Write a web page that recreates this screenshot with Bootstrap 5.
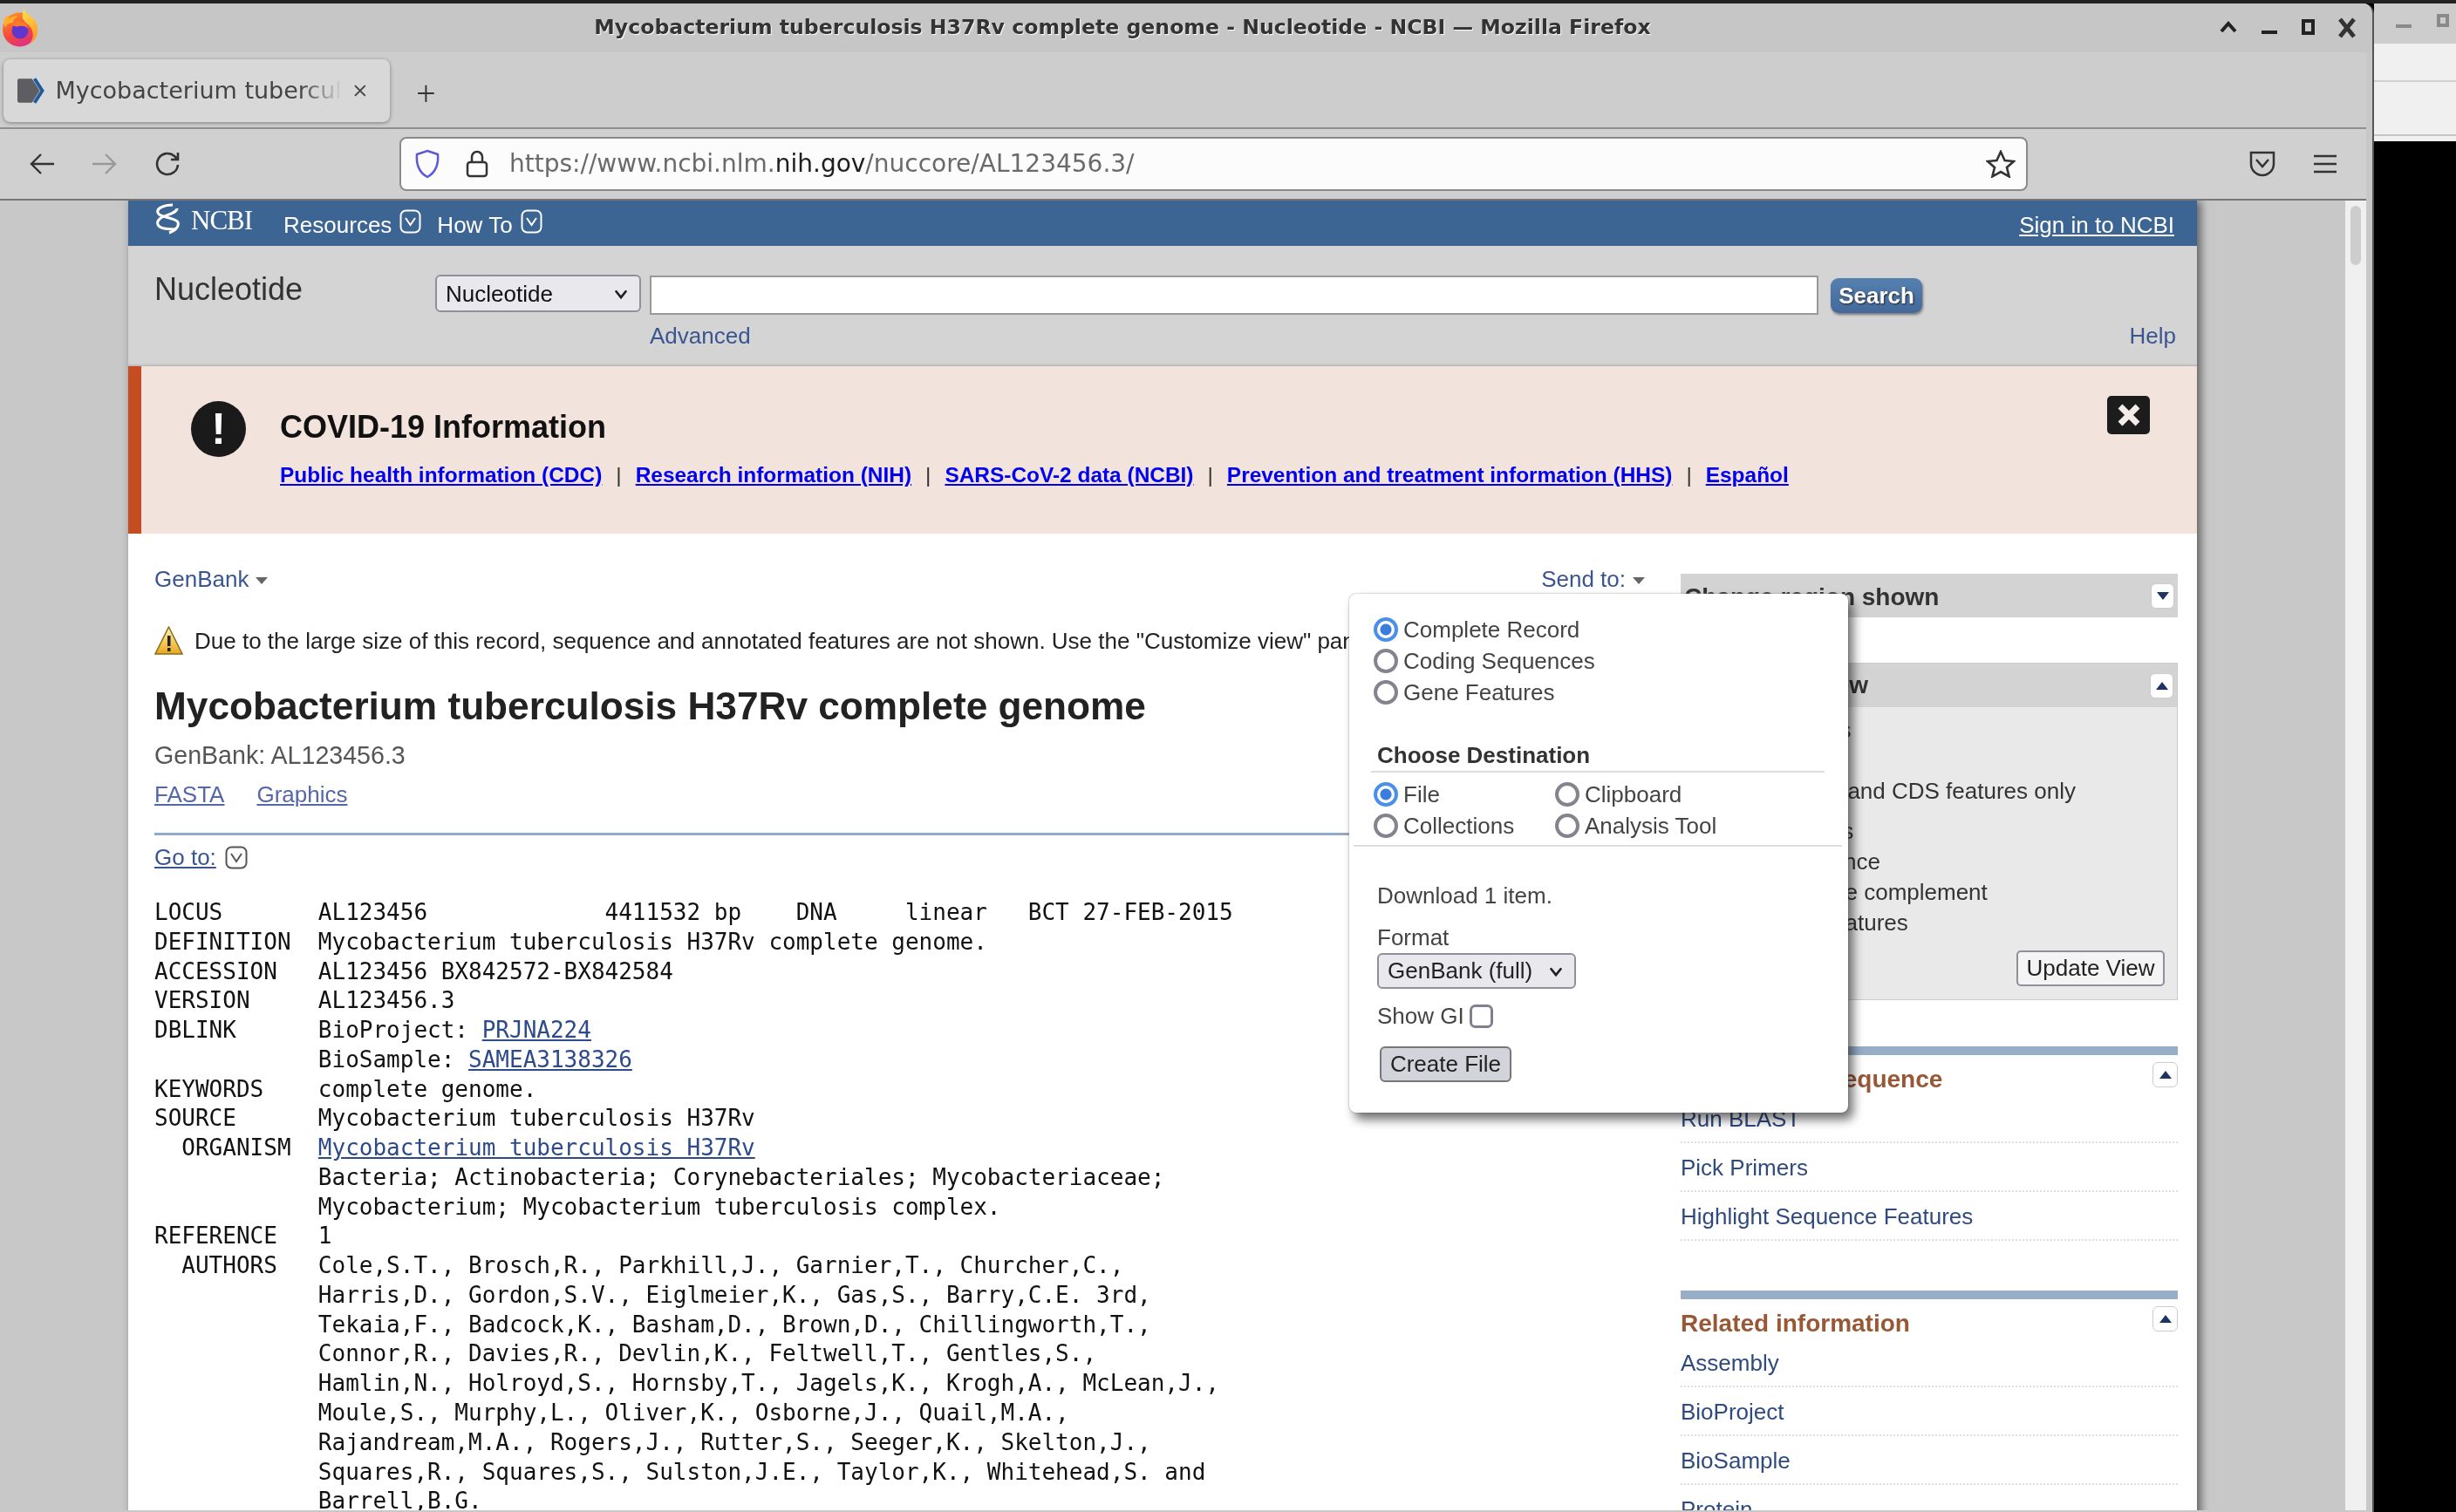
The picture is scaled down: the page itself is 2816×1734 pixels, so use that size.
<!DOCTYPE html>
<html lang="en">
<head>
  <meta charset="UTF-8">
  <title>Mycobacterium tuberculosis H37Rv complete genome - Nucleotide - NCBI</title>
  <link rel="stylesheet" href="https://cdn.jsdelivr.net/npm/bootstrap@5.3.0/dist/css/bootstrap.min.css">
  <style>
    html, body { height: 100%; }
    body { background: #000; overflow: hidden; font-family: "Liberation Sans", sans-serif; font-size: 26px; color: #222; }
    a { color: #3b5590; text-decoration: none; }

    /* desktop windows, the screenshot is a soft upscale so everything gets a slight blur */
    .back-win { position: absolute; left: 2722px; top: 4px; width: 94px; height: 158px; background: #f0f0f0; filter: blur(.6px); }
    .back-title { height: 46px; background: #cdcdcd; padding: 0 8px 0 25px; }
    .back-line { height: 44px; border-bottom: 2px solid #cfcfcf; }
    .back-line2 { height: 62px; border-bottom: 2px solid #c4c4c4; }
    .back-min { width: 18px; height: 4px; background: #8a8a8a; margin-top: 6px; }
    .back-max { width: 14px; height: 15px; border: 4px solid #8a8a8a; margin-top: -8px; }
    .top-strip { position: absolute; left: 0; top: 0; width: 100%; height: 4px; background: #222; }
    .win { position: absolute; left: 0; top: 4px; width: 2722px; height: 1730px; background: #c8c8c8; border-right: 2px solid #555; border-top-right-radius: 12px; overflow: hidden; filter: blur(.6px); }
    .win-body { margin-right: 7px; }

    /* firefox chrome */
    .title-row { height: 56px; background: #c6c6c6; padding-right: 146px; }
    .ff-logo { position: absolute; left: 1px; top: 5px; }
    .win-title { font-family: "DejaVu Sans", sans-serif; font-weight: 700; font-size: 23.6px; color: #333; text-shadow: 1px 1px 1px #fff; }
    .win-ctrls { position: absolute; right: 15px; top: 14px; gap: 18px; }
    .tab-row { height: 88px; background: #cdcdcd; border-bottom: 2px solid #8e8e8e; padding: 8px 0 0 4px; }
    .ff-tab { width: 443px; height: 72px; background: #d8d8d8; border-radius: 8px; box-shadow: 0 1px 4px rgba(0,0,0,.4); padding: 0 26px 0 16px; gap: 12px; }
    .tab-text { width: 336px; overflow: hidden; white-space: nowrap; font-family: "DejaVu Sans", sans-serif; font-size: 27px; color: #444; -webkit-mask-image: linear-gradient(to right, #000 85%, transparent); mask-image: linear-gradient(to right, #000 85%, transparent); }
    .tab-plus { margin-left: 30px; font-size: 40px; font-weight: 300; color: #333; line-height: 1; font-family: "Noto Sans", sans-serif; }
    .tool-row { height: 82px; background: #d0d0d0; border-bottom: 2px solid #777; padding: 0 34px 0 33px; }
    .tool-gap { margin-left: 42px; }
    .url-box { width: 1867px; height: 62px; margin-left: 249px; background: #fcfcfc; border: 2px solid #8a8a8a; border-radius: 8px; padding: 0 12px 0 15px; }
    .url-text { font-family: "DejaVu Sans", sans-serif; font-size: 28px; color: #6a6a6a; white-space: nowrap; margin-left: 24px; }
    .url-text b { font-weight: 400; color: #1e1e1e; }
    .pocket-ico { margin-right: 44px; }
    .lock-ico { margin-left: 29px; }

    /* page viewport */
    .viewport { height: 1502px; background: #c8c8c8; padding-left: 147px; overflow: hidden; }
    .ncbi-page { width: 2372px; height: 1600px; background: #fff; box-shadow: 4px 0 10px rgba(0,0,0,.55); flex: none; }
    .scroll-track { width: 24px; height: 1502px; margin-left: 170px; background: #f0f0f0; padding: 6px 6px; flex: none; }
    .scroll-thumb { height: 68px; background: #cdcdcd; border-radius: 6px; }

    .ncbi-bar { height: 52px; background: #3d6593; padding: 4px 26px 0 30px; color: #fff; }
    .ncbi-bar a { color: #fff; }
    .helix-ico { margin-top: -14px; }
    .ncbi-word { font-family: "Liberation Serif", serif; font-size: 31px; letter-spacing: -1px; margin-left: 10px; margin-right: 36px; margin-top: -10px; }
    .ncbi-res { margin-right: 9px; }
    .ncbi-chev { margin-right: 18px; margin-top: -8px; }
    .ncbi-sign { margin-left: auto; text-decoration: underline; }

    .search-area { height: 138px; background: #d4d4d4; padding-left: 30px; box-shadow: inset 0 -3px 3px -2px #aaa; }
    .db-name { width: 322px; font-size: 36px; color: #333; margin-top: 28px; line-height: 44px; }
    .db-select { width: 236px; height: 43px; padding: 0 30px 0 10px; font-size: 26px; line-height: 38px; background-color: #e9e9ed; border: 2px solid #8f8f9d; border-radius: 6px; color: #111; margin-top: 33px; background-position: right 10px center; background-size: 22px; --bs-form-select-bg-img: url("data:image/svg+xml,%3csvg xmlns='http://www.w3.org/2000/svg' viewBox='0 0 16 16'%3e%3cpath fill='none' stroke='%23222' stroke-linecap='round' stroke-width='2' d='M4 6l4 5 4-5'/%3e%3c/svg%3e"); }
    .term-input { width: 1340px; height: 45px; margin: 34px 0 0 10px; border: 2px solid #999; border-radius: 0; padding: 0 6px; font-size: 26px; }
    .search-btn { height: 40px; width: 105px; margin: 37px 0 0 14px; padding: 0; background: linear-gradient(#5480b0, #43699a); border: 0; border-radius: 9px; color: #fff; font-weight: 700; font-size: 26px; text-shadow: 1px 1px 2px #222; box-shadow: 1px 2px 3px #777; }
    .adv-row { padding: 0 24px 0 568px; margin-top: 6px; line-height: 36px; }

    .covid-box { height: 192px; background: #f2e3dc; border-left: 15px solid #c64c22; padding: 40px 30px 0 57px; }
    .covid-icon { width: 63px; height: 64px; border-radius: 50%; background: #1a1a1a; color: #fff; font-weight: 700; font-size: 50px; line-height: 64px; text-align: center; flex: none; margin-right: 39px; }
    .covid-head { font-size: 36px; font-weight: 700; line-height: 60px; color: #111; margin-bottom: 0; }
    .covid-links { font-size: 24.45px; font-weight: 700; line-height: 36px; margin-top: 7px; white-space: nowrap; }
    .covid-links a { color: #0000ee; text-decoration: underline; }
    .covid-links span { font-weight: 400; margin: 0 16px; color: #333; }
    .covid-x { position: absolute; left: 2095px; top: -6px; width: 49px; height: 44px; background: #1c1c1c; border-radius: 5px; color: #fff; }
    .covid-wrap { position: relative; flex: 1; }

    .rec-col { width: 1709px; flex: none; margin-right: 41px; }
    .rec-main { padding-left: 30px; }
    .rec-bar { height: 36px; line-height: 36px; margin-top: 34px; width: 1709px; }
    .caret-mini { display: inline-block; border: 7px solid transparent; border-top: 8px solid #666; border-bottom: 0; margin-left: 8px; vertical-align: 3px; }
    .warn-row { height: 36px; line-height: 36px; margin-top: 35px; white-space: nowrap; overflow: hidden; color: #222; gap: 13px; }
    .rec-title { font-size: 44.2px; font-weight: 700; line-height: 60px; height: 60px; margin: 27px 0 8px; color: #222; white-space: nowrap; }
    .rec-acc { font-size: 28.6px; color: #555; height: 36px; line-height: 36px; }
    .rec-links { height: 36px; line-height: 36px; margin-top: 9px; gap: 37px; }
    .rec-links a { color: #5567ab; text-decoration: underline; }
    .rec-rule { height: 3px; background: #93aac4; margin-top: 26px; }
    .goto-row { height: 36px; line-height: 36px; margin-top: 7px; gap: 10px; }
    .goto-row a { color: #3b5590; text-decoration: underline; }
    .gb-pre { font-family: "DejaVu Sans Mono", monospace; font-size: 26px; line-height: 33.76px; margin: 29px 0 0; color: #111; overflow: visible; }
    .gb-pre a { color: #2d4a8a; text-decoration: underline; }

    .side-col { width: 570px; flex: none; }
    .side-head { height: 50px; background: #d3d3d3; font-weight: 700; font-size: 28px; color: #333; padding-left: 4px; margin-top: 46px; line-height: 50px; }
    .side-head span { margin-top: 3px; }
    .tog-btn { width: 27px; height: 29px; background: #fff; border: 1px solid #ccc; border-radius: 6px; flex: none; }
    .tog-tri-d { border: 7px solid transparent; border-top: 9px solid #1c3463; border-bottom: 0; }
    .tog-tri-u { border: 7px solid transparent; border-bottom: 9px solid #1c3463; border-top: 0; }
    .cust-box { height: 387px; margin-top: 52px; background: #e9e9e9; border: 1px solid #ccc; }
    .cust-head { height: 50px; background: #d3d3d3; font-weight: 700; font-size: 28px; color: #333; padding-left: 4px; line-height: 50px; }
    .cust-body { padding: 9px 0 0 21px; line-height: 35px; white-space: nowrap; color: #333; }
    .cust-opt { padding-left: 22px; }
    .cust-gap { margin-top: 11px; }
    .upd-btn { height: 41px; width: 170px; padding: 0; font-size: 26px; line-height: 37px; background: #f4f4f4; border: 2px solid #8f8f9d; border-radius: 5px; color: #222; margin: 14px 14px 0 auto; display: block; }
    .sec-bar { height: 10px; background: #98aec8; }
    .sec-bar-first { margin-top: 53px; }
    .sec-bar-next { margin-top: 57px; }
    .sec-head { height: 45px; color: #985735; font-weight: 700; font-size: 28px; line-height: 56px; }
    .sec-tog { margin-top: 8px; width: 29px; }
    .sec-row { height: 56px; line-height: 56px; border-bottom: 2px dotted #ddd; color: #2f4a7f; }
    .sec-row a { color: #2f4a7f; }

    /* send to popup */
    .send-pop { position: absolute; left: 1400px; top: 451px; width: 572px; height: 595px; background: #fff; border-radius: 8px; box-shadow: 6px 8px 12px rgba(0,0,0,.55), 0 0 2px #999; color: #444; padding: 0; z-index: 5; }
    .pop-top { height: 23px; }
    .pop-line { height: 36px; gap: 6px; padding-left: 28px; }
    .pop-radio { width: 28px; height: 28px; margin: 0; background-color: #fff; border: 4px solid #84848f; flex: none; }
    .pop-radio:checked { background-color: #fff; border-color: #4a90e8; background-image: radial-gradient(circle, #3b7ddd 0 6px, #fff 7px); }
    .pop-dest { font-weight: 700; padding-left: 32px; margin-top: 36px; line-height: 36px; color: #333; }
    .pop-rule { height: 2px; background: #ddd; margin: 0 27px 7px 25px; }
    .pop-rule2 { height: 2px; background: #ddd; margin: 4px 7px 38px 5px; }
    .pop-pad { padding-left: 32px; line-height: 36px; }
    .pop-format { margin-top: 12px; }
    .pop-gi { margin-top: 13px; }
    .pop-half { width: 202px; gap: 6px; }
    .pop-other { gap: 6px; }
    .fmt-select { width: 228px; height: 41px; padding: 0 30px 0 10px; font-size: 26px; line-height: 37px; background-color: #e9e9ed; border: 2px solid #8f8f9d; border-radius: 6px; color: #222; background-position: right 10px center; background-size: 22px; --bs-form-select-bg-img: url("data:image/svg+xml,%3csvg xmlns='http://www.w3.org/2000/svg' viewBox='0 0 16 16'%3e%3cpath fill='none' stroke='%23222' stroke-linecap='round' stroke-width='2' d='M4 6l4 5 4-5'/%3e%3c/svg%3e"); }
    .gi-check { width: 27px; height: 27px; margin: 0 0 0 6px; background: #fff; border: 3px solid #80808f; border-radius: 3px; }
    .create-btn { margin: 17px 0 0 35px; width: 151px; height: 41px; padding: 0; font-size: 26px; line-height: 37px; background: #d3d3db; border: 2px solid #777; border-radius: 6px; color: #222; display: block; }
  </style>
</head>
<body>
  <div class="top-strip"></div>

  <div class="back-win">
    <div class="back-title d-flex align-items-center justify-content-between"><div class="back-min"></div><div class="back-max"></div></div>
    <div class="back-line"></div>
    <div class="back-line2"></div>
  </div>

  <div class="win">
    <div class="title-row d-flex align-items-center justify-content-center position-relative">
      <svg class="ff-logo" width="44" height="46" viewBox="0 0 44 46">
        <defs>
          <linearGradient id="ffBody" x1="0.1" y1="0.1" x2="0.5" y2="1"><stop offset="0" stop-color="#ff8a24"/><stop offset=".6" stop-color="#f4483c"/><stop offset="1" stop-color="#e0307f"/></linearGradient>
          <linearGradient id="ffFlame" x1="0" y1="0" x2="0.3" y2="1"><stop offset="0" stop-color="#ffe24a"/><stop offset="1" stop-color="#ff9a2a"/></linearGradient>
        </defs>
        <circle cx="21.500" cy="25" r="19.500" fill="url(#ffBody)"/>
        <path d="M27 1c0 5 6 7 11 12 5 6 5 13 3 19-2 5-5 8-8 9 4-5 5-11 2-17-3-5-8-7-10-12-1-4 0-8 2-11z" fill="url(#ffFlame)"/>
        <path d="M3 15c1-3 3-5 5-7 0 2 1 3 2 4 3-2 7-3 10-2-4 1-6 4-6 7-4 0-8 2-9 6-1-3-2-5-2-8z" fill="#ffb02e"/>
        <circle cx="22" cy="26" r="9.500" fill="#6136cf"/>
        <path d="M12 19c3-4 10-5 15-2 3 2 4 5 4 7-2-3-6-4-10-3-3 1-6 0-9-2z" fill="#ff7a2e"/>
      </svg>
      <div class="win-title">Mycobacterium tuberculosis H37Rv complete genome - Nucleotide - NCBI — Mozilla Firefox</div>
      <svg class="win-ctrls position-absolute" width="160" height="28" viewBox="0 0 160 28">
        <path d="M2 18l8-9 8 9" fill="none" stroke="#222" stroke-width="4"/>
        <rect x="48" y="17" width="18" height="4" fill="#222"/>
        <rect x="96" y="6" width="11" height="14" fill="none" stroke="#222" stroke-width="4"/>
        <path d="M138 4l16 20M154 4l-16 20" fill="none" stroke="#333" stroke-width="5"/>
      </svg>
    </div>

    <div class="win-body">
      <div class="tab-row d-flex">
        <div class="ff-tab d-flex align-items-center">
          <svg width="32" height="30" viewBox="0 0 32 30" class="flex-none"><path d="M0 3a2 2 0 0 1 2-2h15l9 14-9 14H2a2 2 0 0 1-2-2z" fill="#5d5d62"/><path d="M20 1l9 14-9 14" fill="none" stroke="#1f5a9e" stroke-width="4"/></svg>
          <div class="tab-text">Mycobacterium tuberculosis H37Rv</div>
          <svg width="16" height="16" viewBox="0 0 16 16" class="ms-auto"><path d="M2 2l12 12M14 2L2 14" stroke="#444" stroke-width="2"/></svg>
        </div>
        <div class="tab-plus align-self-center">+</div>
      </div>

      <div class="tool-row d-flex align-items-center">
        <svg width="30" height="30" viewBox="0 0 30 30"><path d="M29 15H3M14 4L3 15l11 11" fill="none" stroke="#333" stroke-width="2.4"/></svg>
        <svg width="30" height="30" viewBox="0 0 30 30" class="tool-gap"><path d="M1 15h26M16 4l11 11-11 11" fill="none" stroke="#999" stroke-width="2.4"/></svg>
        <svg width="32" height="32" viewBox="0 0 32 32" class="tool-gap"><path d="M27 17a12 12 0 1 1-4-10l4 4M27 3v8h-8" fill="none" stroke="#333" stroke-width="2.6"/></svg>
        <div class="url-box d-flex align-items-center">
          <svg width="30" height="34" viewBox="0 0 30 34" class="flex-none"><path d="M15 2l12 4c1 12-3 21-12 26C6 27 2 18 3 6z" fill="none" stroke="#5b5bd6" stroke-width="2.5"/></svg>
          <svg width="26" height="32" viewBox="0 0 26 32" class="lock-ico flex-none"><rect x="2" y="14" width="22" height="16" rx="3" fill="none" stroke="#333" stroke-width="2.5"/><path d="M7 14V8a6 6 0 0 1 12 0v6" fill="none" stroke="#333" stroke-width="2.5"/></svg>
          <div class="url-text">https://www.ncbi.nlm.<b>nih.gov</b>/nuccore/AL123456.3/</div>
          <svg width="34" height="32" viewBox="0 0 34 32" class="ms-auto"><path d="M17 2l4.600 10 10.400 1-8 7 2.600 10.400L17 25l-9.600 5.400L10 20l-8-7 10.400-1z" fill="none" stroke="#333" stroke-width="2.6"/></svg>
        </div>
        <svg width="30" height="32" viewBox="0 0 30 32" class="ms-auto pocket-ico"><path d="M2 3h26v13a13 13 0 0 1-26 0z" fill="none" stroke="#333" stroke-width="2.5"/><path d="M8 11l7 8 7-8" fill="none" stroke="#333" stroke-width="2.5"/></svg>
        <svg width="26" height="24" viewBox="0 0 26 24"><path d="M0 3h26M0 12h26M0 21h26" stroke="#333" stroke-width="2.6"/></svg>
      </div>

      <div class="viewport d-flex">
        <div class="ncbi-page position-relative">
          <div class="ncbi-bar d-flex align-items-center">
            <svg width="32" height="36" viewBox="0 0 32 36" class="helix-ico flex-none"><path d="M21 2C11 2 2 6 4 11c2 6 20 5 23 11 2 5-4 10-10 12" fill="none" stroke="#fff" stroke-width="3"/><path d="M26 6c0 5-11 7-17 10-6 3-7 8-3 11 4 3 13 3 19 3" fill="none" stroke="#fff" stroke-width="3"/></svg>
            <span class="ncbi-word">NCBI</span>
            <a href="#" class="ncbi-res">Resources</a>
            <svg class="ncbi-chev" width="25" height="28" viewBox="0 0 25 28"><rect x="1.500" y="1.500" width="22" height="25" rx="6" fill="none" stroke="#fff" stroke-width="2"/><path d="M7 10l5.500 8 5.500-8" fill="none" stroke="#fff" stroke-width="2"/></svg>
            <a href="#" class="ncbi-res">How To</a>
            <svg class="ncbi-chev" width="25" height="28" viewBox="0 0 25 28"><rect x="1.500" y="1.500" width="22" height="25" rx="6" fill="none" stroke="#fff" stroke-width="2"/><path d="M7 10l5.500 8 5.500-8" fill="none" stroke="#fff" stroke-width="2"/></svg>
            <a href="#" class="ncbi-sign">Sign in to NCBI</a>
          </div>

          <div class="search-area">
            <div class="d-flex align-items-start">
              <div class="db-name">Nucleotide</div>
              <select class="form-select db-select"><option>Nucleotide</option></select>
              <input type="text" class="form-control term-input">
              <button type="button" class="btn search-btn">Search</button>
            </div>
            <div class="adv-row d-flex justify-content-between"><a href="#">Advanced</a><a href="#">Help</a></div>
          </div>

          <div class="covid-box d-flex">
            <div class="covid-icon">!</div>
            <div class="covid-wrap">
              <h4 class="covid-head">COVID-19 Information</h4>
              <div class="covid-links"><a href="#">Public health information (CDC)</a><span>|</span><a href="#">Research information (NIH)</a><span>|</span><a href="#">SARS-CoV-2 data (NCBI)</a><span>|</span><a href="#">Prevention and treatment information (HHS)</a><span>|</span><a href="#">Español</a></div>
              <div class="covid-x d-flex align-items-center justify-content-center"><svg width="28" height="26" viewBox="0 0 28 26"><path d="M4 3l20 20M24 3L4 23" stroke="#f4ece8" stroke-width="7"/></svg></div>
            </div>
          </div>

          <div class="rec-main d-flex">
            <div class="rec-col">
              <div class="rec-bar d-flex justify-content-between"><a href="#">GenBank<i class="caret-mini"></i></a><a href="#">Send to:<i class="caret-mini"></i></a></div>
              <div class="warn-row d-flex align-items-center">
                <svg width="33" height="34" viewBox="0 0 33 34" class="flex-none"><defs><linearGradient id="warnFill" x1="0" y1="0" x2="0" y2="1"><stop offset="0" stop-color="#fff3b0"/><stop offset="1" stop-color="#e9a91e"/></linearGradient></defs><path d="M16.500 1L32 32H1z" fill="url(#warnFill)" stroke="#8a6d1a" stroke-width="1.500"/><rect x="15" y="11" width="3.500" height="12" fill="#222"/><rect x="15" y="25" width="3.500" height="4" fill="#222"/></svg>
                <span>Due to the large size of this record, sequence and annotated features are not shown. Use the "Customize view" panel to change the display.</span>
              </div>
              <h1 class="rec-title">Mycobacterium tuberculosis H37Rv complete genome</h1>
              <div class="rec-acc">GenBank: AL123456.3</div>
              <div class="rec-links d-flex"><a href="#">FASTA</a><a href="#">Graphics</a></div>
              <div class="rec-rule"></div>
              <div class="goto-row d-flex align-items-center"><a href="#">Go to:</a><svg width="26" height="27" viewBox="0 0 26 27"><rect x="1.500" y="1.500" width="23" height="24" rx="6" fill="none" stroke="#555" stroke-width="2"/><path d="M7 9l6 9 6-9" fill="none" stroke="#555" stroke-width="2"/></svg></div>
<pre class="gb-pre">LOCUS       AL123456             4411532 bp    DNA     linear   BCT 27-FEB-2015
DEFINITION  Mycobacterium tuberculosis H37Rv complete genome.
ACCESSION   AL123456 BX842572-BX842584
VERSION     AL123456.3
DBLINK      BioProject: <a href="#">PRJNA224</a>
            BioSample: <a href="#">SAMEA3138326</a>
KEYWORDS    complete genome.
SOURCE      Mycobacterium tuberculosis H37Rv
  ORGANISM  <a href="#">Mycobacterium tuberculosis H37Rv</a>
            Bacteria; Actinobacteria; Corynebacteriales; Mycobacteriaceae;
            Mycobacterium; Mycobacterium tuberculosis complex.
REFERENCE   1
  AUTHORS   Cole,S.T., Brosch,R., Parkhill,J., Garnier,T., Churcher,C.,
            Harris,D., Gordon,S.V., Eiglmeier,K., Gas,S., Barry,C.E. 3rd,
            Tekaia,F., Badcock,K., Basham,D., Brown,D., Chillingworth,T.,
            Connor,R., Davies,R., Devlin,K., Feltwell,T., Gentles,S.,
            Hamlin,N., Holroyd,S., Hornsby,T., Jagels,K., Krogh,A., McLean,J.,
            Moule,S., Murphy,L., Oliver,K., Osborne,J., Quail,M.A.,
            Rajandream,M.A., Rogers,J., Rutter,S., Seeger,K., Skelton,J.,
            Squares,R., Squares,S., Sulston,J.E., Taylor,K., Whitehead,S. and
            Barrell,B.G.</pre>
            </div>

            <div class="side-col">
              <div class="side-head d-flex align-items-center justify-content-between pe-0">
                <span>Change region shown</span>
                <div class="tog-btn d-flex align-items-center justify-content-center me-1"><div class="tog-tri-d"></div></div>
              </div>
              <div class="cust-box">
                <div class="cust-head d-flex align-items-center justify-content-between">
                  <span>Customize view</span>
                  <div class="tog-btn d-flex align-items-center justify-content-center me-1"><div class="tog-tri-u"></div></div>
                </div>
                <div class="cust-body">
                  <div>Basic Features</div>
                  <div class="cust-opt">All features</div>
                  <div class="cust-opt">Gene, RNA, and CDS features only</div>
                  <div class="cust-gap">Display options</div>
                  <div class="cust-opt">Show sequence</div>
                  <div class="cust-opt">Show reverse complement</div>
                  <div class="cust-opt">Show gap features</div>
                  <button type="button" class="btn upd-btn">Update View</button>
                </div>
              </div>

              <div class="sec-bar sec-bar-first"></div>
              <div class="sec-head d-flex justify-content-between">
                <span>Analyze this sequence</span>
                <div class="tog-btn sec-tog d-flex align-items-center justify-content-center"><div class="tog-tri-u"></div></div>
              </div>
              <div class="sec-row"><a href="#">Run BLAST</a></div>
              <div class="sec-row"><a href="#">Pick Primers</a></div>
              <div class="sec-row"><a href="#">Highlight Sequence Features</a></div>

              <div class="sec-bar sec-bar-next"></div>
              <div class="sec-head d-flex justify-content-between">
                <span>Related information</span>
                <div class="tog-btn sec-tog d-flex align-items-center justify-content-center"><div class="tog-tri-u"></div></div>
              </div>
              <div class="sec-row"><a href="#">Assembly</a></div>
              <div class="sec-row"><a href="#">BioProject</a></div>
              <div class="sec-row"><a href="#">BioSample</a></div>
              <div class="sec-row"><a href="#">Protein</a></div>
            </div>
          </div>

          <div class="send-pop">
            <div class="pop-top"></div>
            <div class="pop-line d-flex align-items-center"><input class="form-check-input pop-radio" type="radio" name="fmtkind" checked><span>Complete Record</span></div>
            <div class="pop-line d-flex align-items-center"><input class="form-check-input pop-radio" type="radio" name="fmtkind"><span>Coding Sequences</span></div>
            <div class="pop-line d-flex align-items-center"><input class="form-check-input pop-radio" type="radio" name="fmtkind"><span>Gene Features</span></div>
            <div class="pop-dest">Choose Destination</div>
            <div class="pop-rule"></div>
            <div class="pop-line d-flex align-items-center">
              <div class="pop-half d-flex align-items-center"><input class="form-check-input pop-radio" type="radio" name="dest" checked><span>File</span></div>
              <div class="pop-other d-flex align-items-center"><input class="form-check-input pop-radio" type="radio" name="dest"><span>Clipboard</span></div>
            </div>
            <div class="pop-line d-flex align-items-center">
              <div class="pop-half d-flex align-items-center"><input class="form-check-input pop-radio" type="radio" name="dest"><span>Collections</span></div>
              <div class="pop-other d-flex align-items-center"><input class="form-check-input pop-radio" type="radio" name="dest"><span>Analysis Tool</span></div>
            </div>
            <div class="pop-rule2"></div>
            <div class="pop-pad">Download 1 item.</div>
            <div class="pop-pad pop-format">Format</div>
            <div class="pop-pad"><select class="form-select fmt-select"><option>GenBank (full)</option></select></div>
            <div class="pop-pad pop-gi d-flex align-items-center">Show GI<input class="form-check-input gi-check" type="checkbox"></div>
            <button type="button" class="btn create-btn">Create File</button>
          </div>
        </div>
        <div class="scroll-track"><div class="scroll-thumb"></div></div>
      </div>
    </div>
  </div>
</body>
</html>
